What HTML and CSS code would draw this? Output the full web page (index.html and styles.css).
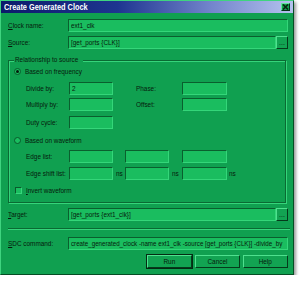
FILE: index.html
```html
<!DOCTYPE html>
<html>
<head>
<meta charset="utf-8">
<link rel="stylesheet" href="styles.css">
</head>
<body>
<div class="window">
  <div class="titlebar">
    <span class="title t">Create Generated Clock</span>
    <span class="close"><svg width="7" height="6" viewBox="0 0 7 6"><path d="M1 0.5 L6 5.5 M6 0.5 L1 5.5" stroke="#062410" stroke-width="1.6"/></svg></span>
  </div>
  <div class="body">
    <div class="row first">
      <span class="lbl"><span class="t"><u>C</u>lock name:</span></span>
      <div class="field grow"><span class="t">ext1_clk</span></div>
    </div>
    <div class="row r2">
      <span class="lbl"><span class="t"><u>S</u>ource:</span></span>
      <div class="field grow"><span class="t">[get_ports {CLK}]</span></div>
      <div class="btn dots">...</div>
    </div>

    <div class="group">
      <div class="legend"><span class="t">Relationship to source</span></div>
      <div class="opt o1"><span class="radio on"></span><span class="t">Based on frequency</span></div>
      <div class="frow f1">
        <span class="flbl"><span class="t">Divide by:</span></span>
        <div class="field w44"><span class="t">2</span></div>
        <span class="flbl l2"><span class="t">Phase:</span></span>
        <div class="field w45"></div>
      </div>
      <div class="frow f2">
        <span class="flbl"><span class="t">Multiply by:</span></span>
        <div class="field w44"></div>
        <span class="flbl l2"><span class="t">Offset:</span></span>
        <div class="field w45"></div>
      </div>
      <div class="frow f3">
        <span class="flbl"><span class="t">Duty cycle:</span></span>
        <div class="field w44"></div>
      </div>
      <div class="opt o2"><span class="radio"></span><span class="t">Based on waveform</span></div>
      <div class="frow f4">
        <span class="flbl"><span class="t">Edge list:</span></span>
        <div class="field w44"></div>
        <span class="ns"></span>
        <div class="field w44"></div>
        <span class="ns2"></span>
        <div class="field w45"></div>
      </div>
      <div class="frow f5">
        <span class="flbl"><span class="t">Edge shift list:</span></span>
        <div class="field w44"></div>
        <span class="ns"><span class="t">ns</span></span>
        <div class="field w44"></div>
        <span class="ns2"><span class="t">ns</span></span>
        <div class="field w45"></div>
        <span class="ns3"><span class="t">ns</span></span>
      </div>
      <div class="opt o3"><span class="check"></span><span class="t"><u>I</u>nvert waveform</span></div>
    </div>

    <div class="row r3">
      <span class="lbl"><span class="t"><u>T</u>arget:</span></span>
      <div class="field grow"><span class="t">[get_ports {ext1_clk}]</span></div>
      <div class="btn dots">...</div>
    </div>
    <div class="sep"></div>
    <div class="row r4">
      <span class="lbl"><span class="t"><u>S</u>DC command:</span></span>
      <div class="field grow"><span class="t sdc">create_generated_clock -name ext1_clk -source [get_ports {CLK}] -divide_by</span></div>
    </div>
    <div class="buttons">
      <div class="btn push def"><span class="t c">Run</span></div>
      <div class="btn push"><span class="t c">Cancel</span></div>
      <div class="btn push"><span class="t c">Help</span></div>
    </div>
  </div>
</div>
</body>
</html>
```

FILE: styles.css
```css
html, body {
  margin: 0;
  padding: 0;
  background: #ffffff;
}
body {
  font-family: "Liberation Sans", Arial, sans-serif;
  font-size: 8px;
  color: #061a0c;
}
.t {
  display: inline-block;
  white-space: nowrap;
  transform: scaleX(0.8);
  transform-origin: 0 50%;
}
.t.c {
  transform-origin: 50% 50%;
}
.t.sdc {
  transform: scaleX(0.775);
}
.window {
  width: 292px;
  height: 273px;
  background: #10a050;
  border-top: 1px solid #3fd47f;
  border-left: 1px solid #3fd47f;
  border-right: 1px solid #064d24;
  border-bottom: 1px solid #064d24;
  box-shadow: 2px 2px 3px rgba(0,0,0,0.4);
  display: flex;
  flex-direction: column;
}
.titlebar {
  height: 12px;
  flex: none;
  background: linear-gradient(to right, #0b1a6a 0%, #1e3590 40%, #7385cc 72%, #b4c2ee 100%);
  display: flex;
  align-items: center;
  justify-content: space-between;
  padding: 0 3px 0 3px;
}
.title {
  color: #ffffff;
  font-weight: bold;
  font-size: 9px;
  transform: scaleX(0.82);
}
.close {
  width: 9px;
  height: 8px;
  background: #12a050;
  border-top: 1px solid #5fe39a;
  border-left: 1px solid #5fe39a;
  border-right: 1px solid #053018;
  border-bottom: 1px solid #053018;
  box-sizing: border-box;
  display: flex;
  align-items: center;
  justify-content: center;
}
.body {
  padding: 0 5px 0 7px;
  display: flex;
  flex-direction: column;
}
.row {
  display: flex;
  align-items: center;
  height: 13px;
}
.row.first { margin-top: 6px; }
.row.r2 { margin-top: 4px; }
.row.r3 { margin-top: 5px; }
.row.r4 { margin-top: 7px; }
.lbl {
  width: 60px;
  flex: none;
}
.field {
  height: 13px;
  box-sizing: border-box;
  background: #1abd5f;
  border-top: 1px solid #0a5f2e;
  border-left: 1px solid #0a5f2e;
  border-right: 1px solid #34d679;
  border-bottom: 1px solid #34d679;
  padding: 0 2px;
  line-height: 11px;
  white-space: nowrap;
  overflow: hidden;
}
.grow { flex: 1; min-width: 0; }
.btn {
  box-sizing: border-box;
  background: #12a352;
  border-top: 1px solid #4fe08e;
  border-left: 1px solid #4fe08e;
  border-right: 1px solid #053a1b;
  border-bottom: 1px solid #053a1b;
  display: flex;
  align-items: center;
  justify-content: center;
}
.dots {
  width: 12px;
  height: 13px;
  flex: none;
  line-height: 8px;
  font-size: 7px;
}
.group {
  margin-top: 11px;
  height: 143px;
  flex: none;
  box-sizing: border-box;
  border: 1px solid #0a6a33;
  box-shadow: 1px 1px 0 #35d47a, inset 1px 1px 0 #35d47a;
  margin-right: 2px;
  position: relative;
  display: flex;
  flex-direction: column;
  padding-left: 5px;
}
.legend {
  position: absolute;
  top: -6px;
  left: 5px;
  background: #10a050;
  padding: 0 1px;
  line-height: 10px;
  width: 67px;
}
.opt {
  display: flex;
  align-items: center;
  height: 9px;
}
.opt.o1 { margin-top: 6px; }
.opt.o2 { margin-top: 7px; }
.opt.o3 { margin-top: 6px; margin-left: 1px; }
.radio {
  width: 7px;
  height: 7px;
  flex: none;
  box-sizing: border-box;
  border-radius: 50%;
  background: #1abd5f;
  border: 1px solid #0a5a2c;
  margin-right: 4px;
  display: flex;
  align-items: center;
  justify-content: center;
}
.radio.on::after {
  content: "";
  width: 3px;
  height: 3px;
  border-radius: 50%;
  background: #041a0b;
}
.check {
  width: 7px;
  height: 7px;
  flex: none;
  box-sizing: border-box;
  background: #1abd5f;
  border-top: 1px solid #0a5a2c;
  border-left: 1px solid #0a5a2c;
  border-right: 1px solid #36d77b;
  border-bottom: 1px solid #36d77b;
  margin-right: 4px;
}
.frow {
  display: flex;
  align-items: center;
  height: 13px;
  margin-left: 12px;
}
.f1 { margin-top: 6px; }
.f2 { margin-top: 3px; }
.f3 { margin-top: 5px; }
.f4 { margin-top: 5px; }
.f5 { margin-top: 4px; }
.flbl {
  width: 43px;
  flex: none;
  white-space: nowrap;
}
.flbl.l2 {
  margin-left: 23px;
  width: 46px;
}
.w44 { width: 44px; flex: none; }
.w45 { width: 45px; flex: none; }
.ns { width: 12px; flex: none; padding-left: 3px; box-sizing: border-box; }
.ns2 { width: 13px; flex: none; padding-left: 3px; box-sizing: border-box; }
.ns3 { padding-left: 2px; }
.sep {
  margin-top: 7px;
  height: 0;
  border-top: 1px solid #0a6a33;
  border-bottom: 1px solid #35d47a;
  margin-right: -2px;
}
.buttons {
  display: flex;
  justify-content: flex-end;
  gap: 3px;
  margin-top: 5px;
}
.push {
  width: 45px;
  height: 13px;
}
.push.def {
  outline: 1px solid #052a13;
}
```
